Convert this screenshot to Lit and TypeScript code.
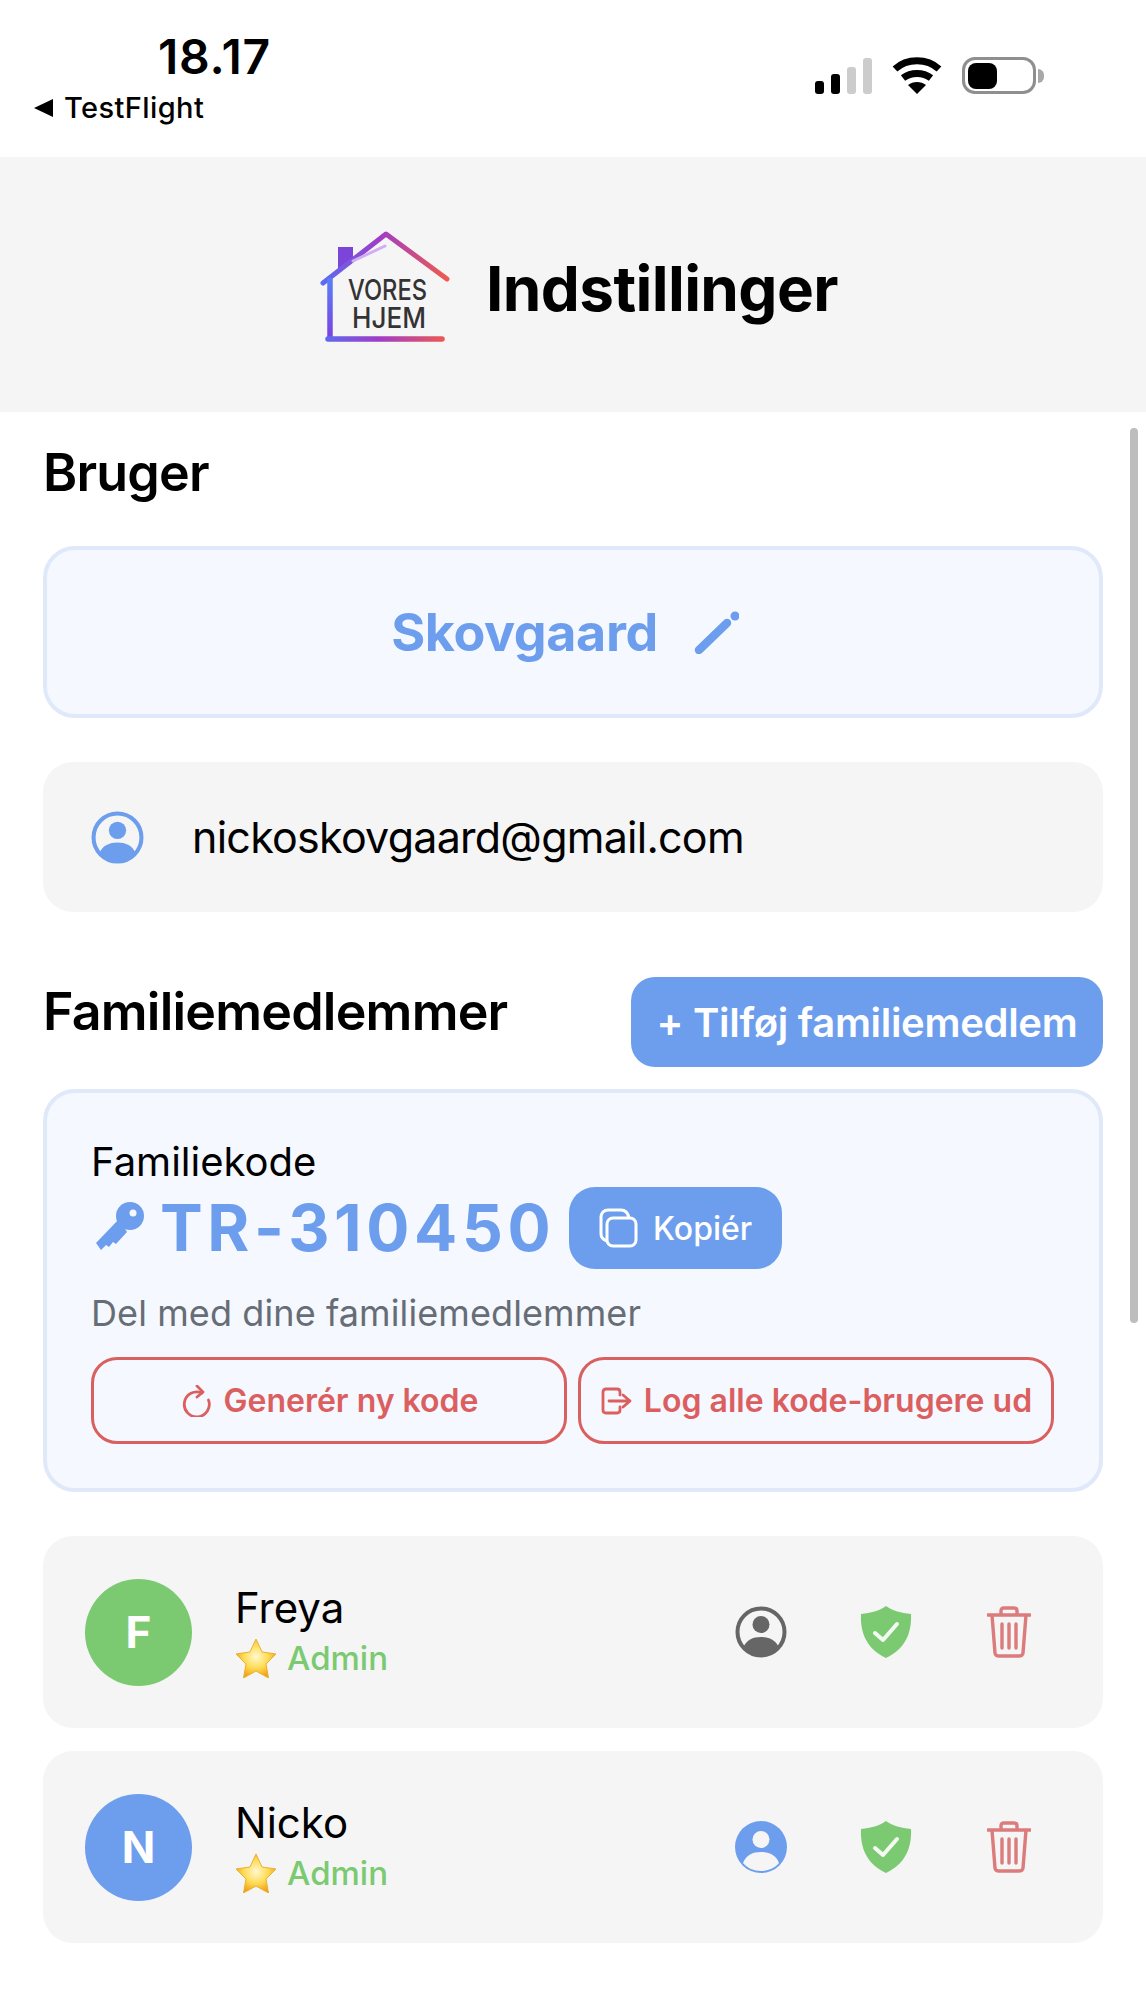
import { LitElement, html, css, svg } from "lit";
import { customElement } from "lit/decorators.js";

const personRing = (c: string, solid: boolean, body: string) => svg`
  <svg class="act" viewBox="0 0 52 52"><circle cx="26" cy="26" r="${solid ? 26 : 23.5}" fill="${solid ? c : "none"}" stroke="${solid ? "none" : c}" stroke-width="4"/>
  <circle cx="26" cy="18.5" r="8.5" fill="${body}"/>
  <path d="M8 42c3-8 10-11 18-11s15 3 18 11c-4 5-11 8-18 8s-14-3-18-8z" fill="${body}"/></svg>`;

const shield = svg`<svg class="act" viewBox="0 0 52 52"><path d="M26 0c7 5 15 7 25 8 1 19-6 35-25 44C7 43 0 27 1 8c10-1 18-3 25-8z" fill="#7bca72"/><path d="M15 27l8 7 14-16" fill="none" stroke="#f4faf2" stroke-width="4" stroke-linecap="round" stroke-linejoin="round"/></svg>`;

const trash = svg`<svg class="act" viewBox="0 0 44 52"><g fill="none" stroke="#dc7b7b" stroke-width="3.4" stroke-linecap="round" stroke-linejoin="round"><path d="M1 9h42M14 9V5c0-2 1-3 3-3h10c2 0 3 1 3 3v4M5 9l3 38c0 2 2 3 4 3h20c2 0 4-1 4-3l3-38M15 18v24M22 18v24M29 18v24"/></g></svg>`;

const star = svg`<svg class="star" viewBox="0 0 42 40"><defs><radialGradient id="st" cx=".5" cy=".45" r=".55"><stop offset="0" stop-color="#fff8d0"/><stop offset=".55" stop-color="#ffdc55"/><stop offset="1" stop-color="#f0a010"/></radialGradient></defs><path d="M21 1l6 13 14 2-10 10 2.500 14L21 33 8.500 40 11 26 1 16l14-2z" fill="url(#st)" stroke="#e9b032" stroke-width="1" stroke-linejoin="round"/></svg>`;

@customElement("app-root")
export class AppRoot extends LitElement {
  static styles = css`
    :host { display: block; width: 1146px; height: 2000px; position: relative; overflow: hidden; background: #fff; font-family: Inter, "Liberation Sans", sans-serif; color: #000; }
    .status { height: 157px; box-sizing: border-box; display: flex; justify-content: space-between; padding: 31px 102px 0 34px; }
    .time { font-size: 48px; font-weight: 600; line-height: 52px; margin-left: 124px; letter-spacing: .8px; }
    .back { display: flex; align-items: center; gap: 11px; font-size: 29px; font-weight: 500; line-height: 36px; margin-top: 7px; letter-spacing: .4px; }
    .back i { width: 0; height: 0; border-style: solid; border-width: 9px 19px 9px 0; border-color: transparent #000 transparent transparent; }
    .sys { display: flex; align-items: center; gap: 20px; height: 37px; margin-top: 26px; }
    .bars { display: flex; align-items: flex-end; gap: 6.500px; height: 36px; }
    .bars span { width: 9.500px; border-radius: 3px; background: #000; }
    .bars span.off { background: #ccc; }
    .battery { display: flex; align-items: center; gap: 2px; }
    .cell { width: 74px; height: 37px; box-sizing: border-box; border: 3.500px solid #8f8f8f; border-radius: 13px; padding: 2.500px; }
    .cell b { display: block; width: 29px; height: 100%; border-radius: 8px; background: #000; }
    .nub { width: 6px; height: 14px; background: #a8a8a8; border-radius: 0 7px 7px 0; }
    .top { height: 255px; background: #f5f5f5; display: flex; align-items: center; justify-content: center; gap: 32px; padding-left: 12px; box-sizing: border-box; }
    .top svg { width: 134px; height: 116px; margin-top: 8px; }
    .top h1 { margin: 9px 0 0; font-size: 62px; line-height: 72px; font-weight: 700; letter-spacing: -.6px; }
    main { padding: 30px 43px 0; display: flex; flex-direction: column; }
    h2 { margin: 0; font-size: 52px; line-height: 62px; font-weight: 600; letter-spacing: -.8px; }
    .name-card { margin-top: 42px; height: 172px; box-sizing: border-box; border: 4px solid #e0e9fa; border-radius: 32px; background: #f5f8ff; display: flex; align-items: center; justify-content: center; gap: 35px; padding-right: 16px; color: #6d9eee; font-size: 52px; font-weight: 700; letter-spacing: -.4px; }
    .name-card svg { width: 46px; height: 46px; margin-top: -2px; }
    .email { margin-top: 44px; height: 150px; border-radius: 30px; background: #f5f5f5; display: flex; align-items: center; gap: 48px; padding-left: 48px; font-size: 43px; letter-spacing: -.75px; font-weight: 400; }
    .email svg { width: 53px; height: 53px; }
    .fam-head { margin-top: 65px; display: flex; justify-content: space-between; align-items: flex-start; }
    .fam-head h2 { margin-top: 4px; }
    .add { height: 90px; width: 472px; border-radius: 24px; background: #6d9eee; color: #fff; font-size: 40px; letter-spacing: -.3px; font-weight: 600; display: flex; align-items: center; justify-content: center; }
    .code { margin-top: 22px; height: 403px; box-sizing: border-box; border: 4px solid #e0e9fa; border-radius: 32px; background: #f5f8ff; padding: 45px 44px 0; }
    .label { font-size: 40px; line-height: 48px; }
    .code-row { display: flex; align-items: center; height: 82px; margin-top: 1px; }
    .code-row .key { width: 52px; height: 52px; margin-left: 3px; flex: none; }
    .num { font-size: 64px; line-height: 82px; font-weight: 700; color: #6d9eee; letter-spacing: 4.600px; margin-left: 14px; }
    .copy { margin-left: 14px; width: 213px; height: 82px; border-radius: 26px; background: #6d9eee; color: #fff; font-size: 32px; font-weight: 500; display: flex; align-items: center; justify-content: center; gap: 14px; }
    .copy svg { width: 40px; height: 40px; }
    .hint { font-size: 36px; letter-spacing: .1px; line-height: 44px; color: #666d75; margin-top: 22px; }
    .btns { display: flex; gap: 11px; margin-top: 22px; }
    .btn { width: 476px; height: 87px; box-sizing: border-box; border: 3px solid #d9605f; border-radius: 26px; color: #db5f5f; font-size: 32px; font-weight: 600; display: flex; align-items: center; justify-content: center; gap: 12px; white-space: nowrap; }
    .btn svg { width: 32px; height: 32px; flex: none; }
    .member { height: 192px; border-radius: 30px; background: #f5f5f5; display: flex; align-items: center; padding: 0 42px; margin-top: 44px; }
    .member + .member { margin-top: 23px; }
    .avatar { width: 107px; height: 107px; border-radius: 50%; color: #fff; font-size: 44px; font-weight: 700; display: flex; align-items: center; justify-content: center; flex: none; }
    .who { margin-left: 43px; flex: 1; }
    .nm { font-size: 42px; line-height: 50px; margin-top: -3px; }
    .role { display: flex; align-items: center; gap: 10px; color: #7bca72; font-size: 33px; line-height: 40px; font-weight: 500; margin-top: 5px; }
    .star { width: 42px; height: 40px; }
    .acts { display: flex; align-items: center; }
    .acts > * { flex: none; }
    .acts .act { width: 52px; height: 52px; }
    .acts .act:nth-child(2) { margin-left: 73px; }
    .acts .act:nth-child(3) { width: 44px; margin-left: 75px; margin-right: 30px; }
    .scroll { position: absolute; left: 1130px; top: 428px; width: 8px; height: 895px; border-radius: 4px; background: #bdbdbd; }
  `;

  private member(letter: string, name: string, color: string, person: unknown) {
    return html`<div class="member">
      <div class="avatar" style="background:${color}">${letter}</div>
      <div class="who"><div class="nm">${name}</div><div class="role">${star}<span>Admin</span></div></div>
      <div class="acts">${person}${shield}${trash}</div>
    </div>`;
  }

  render() {
    return html`
      <div class="status">
        <div>
          <div class="time">18.17</div>
          <div class="back"><i></i><span>TestFlight</span></div>
        </div>
        <div class="sys">
          <div class="bars"><span style="height:13px"></span><span style="height:20px"></span><span class="off" style="height:27px"></span><span class="off" style="height:36px"></span></div>
          <svg width="50" height="37" viewBox="0 0 50 37"><g fill="none" stroke="#000" stroke-width="7"><path d="M3 12c12-11 32-11 44 0"/><path d="M11 21c8-6 20-6 28 0"/></g><path d="M16 28c5-4 13-4 18 0l-9 9z"/></svg>
          <div class="battery"><div class="cell"><b></b></div><div class="nub"></div></div>
        </div>
      </div>
      <div class="top">
        <svg viewBox="0 0 134 116">
          <defs>
            <linearGradient id="g1" gradientUnits="userSpaceOnUse" x1="3" y1="0" x2="127" y2="0"><stop offset="0" stop-color="#5a6cf0"/><stop offset=".45" stop-color="#a03cc8"/><stop offset="1" stop-color="#ee5a4e"/></linearGradient>
            <linearGradient id="g2" gradientUnits="userSpaceOnUse" x1="0" y1="52" x2="0" y2="110"><stop offset="0" stop-color="#5b7cf5"/><stop offset="1" stop-color="#7a3fe0"/></linearGradient>
          </defs>
          <path d="M18 16h15v14L18 42z" fill="#7a45d8"/>
          <path d="M3 52L66 3l61 45" fill="none" stroke="url(#g1)" stroke-width="5" stroke-linecap="round" stroke-linejoin="round"/>
          <path d="M33 30L65 15" fill="none" stroke="#cfaef5" stroke-width="3" stroke-linecap="round"/>
          <path d="M10 47v61" fill="none" stroke="url(#g2)" stroke-width="5.500"/>
          <path d="M8 108h114" fill="none" stroke="url(#g1)" stroke-width="5.500" stroke-linecap="round"/>
          <text text-anchor="middle" font-size="29" font-weight="500" fill="#333"><tspan x="67.500" y="69" textLength="79" lengthAdjust="spacingAndGlyphs">VORES</tspan><tspan x="69" y="97" font-size="28" textLength="74" lengthAdjust="spacingAndGlyphs">HJEM</tspan></text>
        </svg>
        <h1>Indstillinger</h1>
      </div>
      <main>
        <h2>Bruger</h2>
        <div class="name-card"><span>Skovgaard</span>
          <svg viewBox="0 0 46 46"><path d="M6 42L34 15" fill="none" stroke="#6d9eee" stroke-width="8.500" stroke-linecap="round"/><circle cx="42" cy="8" r="4.500" fill="#6d9eee"/></svg>
        </div>
        <div class="email">
          <svg viewBox="0 0 52 52"><circle cx="26" cy="26" r="23.500" fill="none" stroke="#6d9eee" stroke-width="4"/><circle cx="26" cy="19" r="8.500" fill="#6d9eee"/><path d="M8 42c3-8 10-11 18-11s15 3 18 11c-4 5-11 8-18 8s-14-3-18-8z" fill="#6d9eee"/></svg>
          <span>nickoskovgaard@gmail.com</span>
        </div>
        <div class="fam-head"><h2>Familiemedlemmer</h2><div class="add">+ Tilføj familiemedlem</div></div>
        <div class="code">
          <div class="label">Familiekode</div>
          <div class="code-row">
            <svg class="key" viewBox="0 0 52 52"><path d="M25 17L2 41l5 7 5-5 3 2 4-5 3 2 11-12z" fill="#6d9eee"/><circle cx="36" cy="14" r="14" fill="#6d9eee"/><circle cx="39" cy="11" r="3.500" fill="#f5f8ff"/></svg>
            <span class="num">TR-310450</span>
            <div class="copy">
              <svg viewBox="0 0 40 40"><g fill="none" stroke="#fff" stroke-width="3"><rect x="8" y="10" width="29" height="28" rx="6"/><path d="M8 33c-3-1-6-3-6-7V9c0-4 3-7 7-7h13c4 0 7 3 8 8"/></g></svg>
              <span>Kopiér</span>
            </div>
          </div>
          <div class="hint">Del med dine familiemedlemmer</div>
          <div class="btns">
            <div class="btn">
              <svg viewBox="0 0 32 32"><g fill="none" stroke="#db5f5f" stroke-width="2.800" stroke-linecap="round" stroke-linejoin="round"><path d="M22 8A12.500 12.500 0 1 0 28.500 15"/><path d="M17 1l6 6-6 5"/></g></svg>
              <span>Generér ny kode</span>
            </div>
            <div class="btn">
              <svg viewBox="0 0 32 32"><g fill="none" stroke="#db5f5f" stroke-width="2.800" stroke-linecap="round" stroke-linejoin="round"><path d="M20 10V7c0-2-1-3-3-3H6C4 4 3 5 3 7v18c0 2 1 3 3 3h11c2 0 3-1 3-3v-3"/><path d="M9 16h21M23 10l7 6-7 6"/></g></svg>
              <span>Log alle kode-brugere ud</span>
            </div>
          </div>
        </div>
        ${this.member("F", "Freya", "#7bca72", personRing("#666", false, "#666"))}
        ${this.member("N", "Nicko", "#6d9eee", personRing("#6d9eee", true, "#f5f5f5"))}
      </main>
      <div class="scroll"></div>
    `;
  }
}
